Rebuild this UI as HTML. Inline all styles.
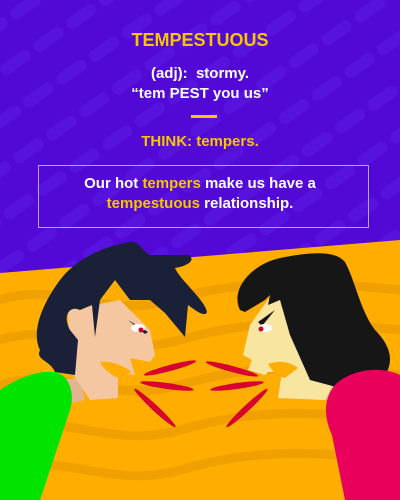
<!DOCTYPE html>
<html><head><meta charset="utf-8"><style>
body{margin:0;width:400px;height:500px;overflow:hidden;font-family:"Liberation Sans",sans-serif}
svg{position:absolute;left:0;top:0}
.t{position:absolute;left:0;width:400px;text-align:center;font-weight:bold}
</style></head><body>
<svg width="400" height="500" viewBox="0 0 400 500">
<defs>
<pattern id="st" width="40" height="40" patternUnits="userSpaceOnUse" patternTransform="rotate(-35)">
<rect width="40" height="40" fill="#5309d6"/>
<rect x="0" y="14" width="34" height="12" rx="6" fill="#5812de"/>
</pattern>
</defs>
<rect width="400" height="500" fill="url(#st)"/>
<polygon points="0,273 400,240 400,500 0,500" fill="#ffae00"/>
<g fill="none" stroke="#f0a000" stroke-width="9" stroke-linecap="round">
<path d="M0,300 C60,280 100,320 170,300 S300,280 400,290"/>
<path d="M0,340 C60,320 110,360 180,340 S300,320 400,330"/>
<path d="M0,385 C60,365 110,405 180,385 S300,365 400,375"/>
<path d="M0,430 C60,410 110,450 180,430 S300,410 400,420"/>
<path d="M0,470 C60,450 110,490 180,470 S300,450 400,460"/>
</g>
<!-- man -->
<polygon points="55,380 80,378 85,400 60,405" fill="#e2b48f"/>
<path d="M68,310 L120,300 L150,330 L155,355 L150,362 L130,358 L135,375 L118,372 L118,398 L90,400 L70,370 Z" fill="#f5c7a0"/>
<path d="M100,362 Q115,360 132,372 L118,378 Q105,372 100,362Z" fill="#ffae00"/>
<path d="M40,350 C30,330 45,300 60,280 C75,260 100,248 125,243 C140,238 140,250 150,255 L188,255 C195,258 192,265 175,268 C180,280 205,300 207,312 C205,318 195,310 188,305 L185,337 L165,313 L150,300 L130,300 L115,280 L100,300 L95,337 L92,305 L80,310 C70,305 62,315 70,330 L78,340 L75,375 L55,372 C50,360 35,360 40,350Z" fill="#1b2039"/>
<path d="M128,320 L148,332 L145,334 Z" fill="#1b2039"/>
<ellipse cx="138" cy="328" rx="7" ry="4" fill="#fff"/>
<circle cx="141" cy="330" r="2.5" fill="#d0001e"/>
<path d="M0,390 C15,380 35,370 55,372 C70,375 75,395 70,410 L40,500 L0,500Z" fill="#00e400"/>
<!-- woman -->
<polygon points="320,380 345,378 340,400 318,400" fill="#d9c583"/>
<path d="M275,290 L250,325 L243,355 L252,360 L248,370 L265,375 L268,372 L282,372 L278,398 L325,400 L340,370 L315,320 Z" fill="#f8e6a0"/>
<path d="M268,364 Q285,358 298,368 L285,378 Q274,375 268,364Z" fill="#ffae00"/>
<path d="M240,310 C230,290 250,265 280,258 C310,252 335,250 345,262 C355,280 360,310 375,330 C395,350 395,370 375,385 L340,388 L310,380 L290,335 L280,300 L268,305 L270,295 L265,300 L245,312Z" fill="#161616"/>
<path d="M258,322 L275,310 L262,326Z" fill="#161616"/>
<ellipse cx="265" cy="328" rx="7" ry="4" fill="#fff"/>
<circle cx="261" cy="329" r="2.5" fill="#d0001e"/>
<path d="M400,375 C380,365 350,370 335,385 C322,400 325,420 332,435 L345,500 L400,500Z" fill="#e8005a"/>
<!-- shouts -->
<g fill="#d8002e">
<ellipse cx="170" cy="368" rx="27" ry="3" transform="rotate(-15 170 368)"/>
<ellipse cx="167" cy="386" rx="27" ry="3" transform="rotate(8 167 386)"/>
<ellipse cx="155" cy="408" rx="28" ry="3" transform="rotate(43 155 408)"/>
<ellipse cx="232" cy="369" rx="27" ry="3" transform="rotate(15 232 369)"/>
<ellipse cx="237" cy="386" rx="27" ry="3" transform="rotate(-8 237 386)"/>
<ellipse cx="247" cy="408" rx="28" ry="3" transform="rotate(-43 247 408)"/>
</g>
</svg>
<div class="t" style="top:30px;font-size:18px;color:#f7c600">TEMPESTUOUS</div>
<div class="t" style="top:64px;font-size:15px;color:#fff;line-height:20px">(adj):&nbsp; stormy.<br>“tem PEST you us”</div>
<div style="position:absolute;left:191px;top:115px;width:26px;height:3px;background:#f7c600"></div>
<div class="t" style="top:133px;font-size:15px;color:#f7c600">THINK: tempers.</div>
<div style="position:absolute;left:38px;top:165px;width:331px;height:63px;border:1px solid #b9a3ef;box-sizing:border-box"></div>
<div class="t" style="top:174px;font-size:15px;color:#fff;line-height:20px">Our hot <span style="color:#f7c600">tempers</span> make us have a<br><span style="color:#f7c600">tempestuous</span> relationship.</div>
</body></html>
